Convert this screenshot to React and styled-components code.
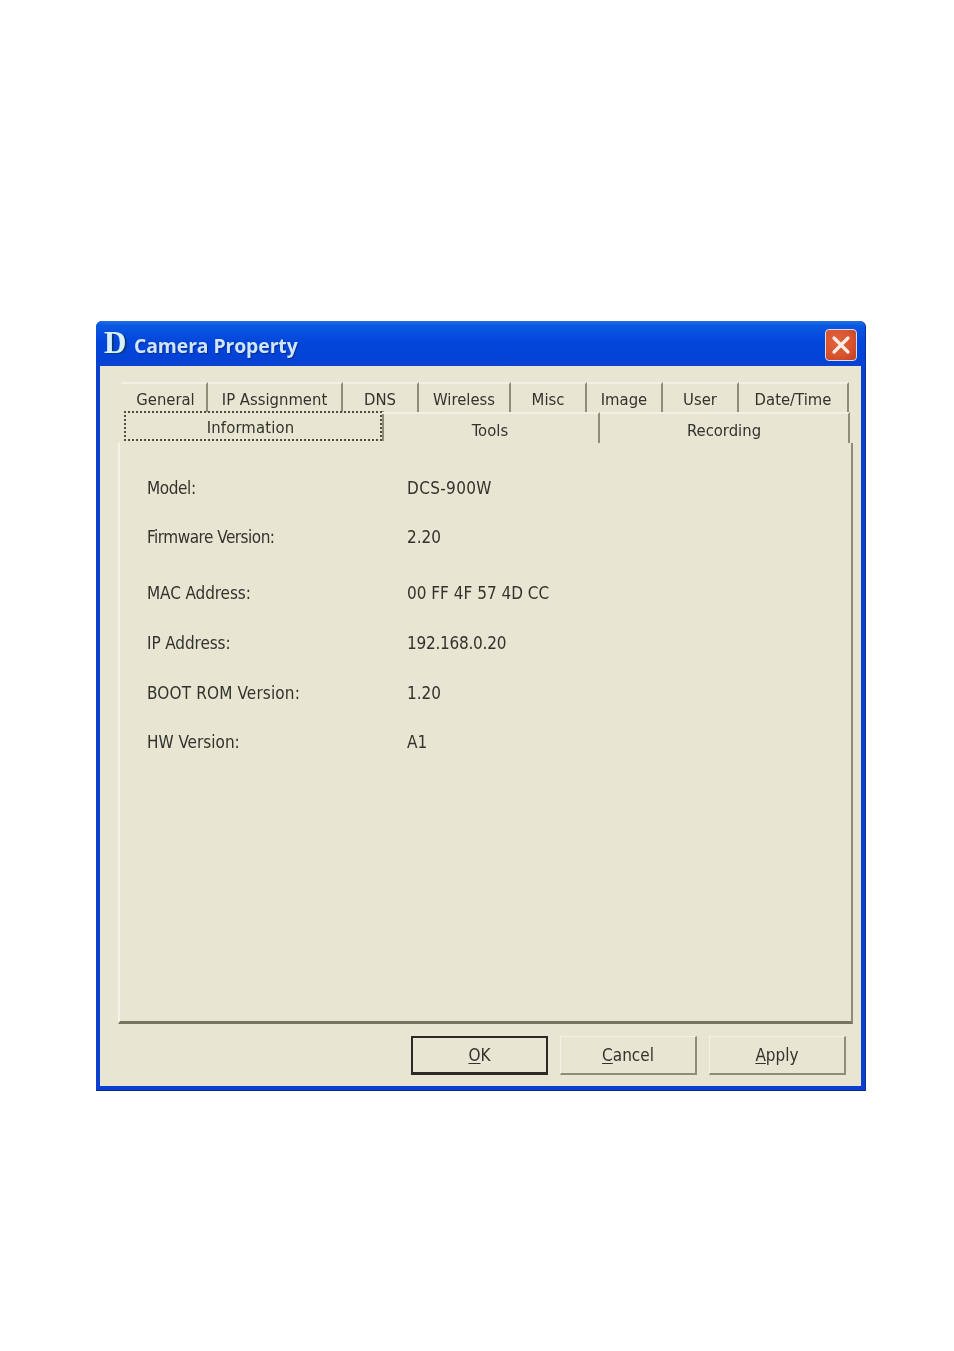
import React from 'react';
import styled, { createGlobalStyle } from 'styled-components';

const Global = createGlobalStyle`
  html, body { margin: 0; padding: 0; background: #fff; }
  body { width: 954px; height: 1351px; overflow: hidden; font-family: "DejaVu Sans Condensed", "DejaVu Sans", sans-serif; }
`;
const Page = styled.div`
  padding: 321px 0 0 96px;
`;
const Window = styled.div`
  width: 770px;
  height: 770px;
  box-sizing: border-box;
  display: flex;
  flex-direction: column;
  background: #0a3fcf;
  border-radius: 6px 6px 0 0;
  padding: 0 4px 4px 4px;
  border-right: 1px solid #0a2f9c;
  border-bottom: 1px solid #0a2a90;
  filter: blur(0.5px);
`;
const TitleBar = styled.div`
  height: 45px;
  flex: none;
  margin: 0 -4px;
  padding: 0 8px 0 8px;
  display: flex;
  align-items: center;
  border-radius: 6px 6px 0 0;
  background: linear-gradient(180deg, #1f6fe8 0%, #0a58e0 10%, #0346dc 45%, #0342d6 80%, #0a44d0 100%);
`;
const Logo = styled.span`
  font: bold 31px/1 "Liberation Serif", serif;
  color: #d8f0f8;
  text-shadow: 2px 1px 0 #0b3a7a;
  width: 26px;
  margin-right: 4px;
  margin-top: -3px;
`;
const Title = styled.span`
  font: bold 19.4px/1 "Open Sans", sans-serif;
  letter-spacing: -0.1px;
  color: #cfe6fa;
  text-shadow: 1px 1px 1px #0a2c90;
  flex: 1;
  margin-top: 5px;
`;
const CloseBtn = styled.div`
  width: 32px;
  height: 32px;
  box-sizing: border-box;
  margin-top: 3px;
  border: 1px solid #d8dcef;
  border-radius: 4px;
  background: radial-gradient(circle at 40% 40%, #e2643f 0%, #d9532e 55%, #bd3f22 100%);
  display: flex;
  align-items: center;
  justify-content: center;
  svg { display: block; }
`;
const Client = styled.div`
  flex: 1;
  display: flex;
  flex-direction: column;
  background: #e8e5d2;
  padding: 16px 14px 0 18px;
`;
const TabRow = styled.div`
  display: flex;
  height: ${p => p.$h}px;
  flex: none;
  padding-left: ${p => p.$pad}px;
`;
const Tab = styled.div`
  width: ${p => p.$w}px;
  flex: none;
  box-sizing: border-box;
  display: flex;
  align-items: center;
  justify-content: center;
  padding-top: ${p => p.$top}px;
  padding-left: ${p => p.$left || 0}px;
  border-top: 2px solid #f2f0e4;
  border-right: 2px solid #8f8c78;
  font-size: 16.5px;
  color: #33332e;
`;
const ActiveTab = styled.div`
  width: 258px;
  height: 30px;
  flex: none;
  box-sizing: border-box;
  margin-top: -1px;
  margin-left: 1px;
  display: flex;
  align-items: center;
  justify-content: center;
  padding: 2px 5px 0 0;
  border: 2px dotted #4d4d45;
  font-size: 16.5px;
  letter-spacing: 0.15px;
  color: #33332e;
  box-shadow: 2px 0 0 #8f8c78;
`;
const Panel = styled.div`
  height: 581px;
  flex: none;
  box-sizing: border-box;
  margin-right: -6px;
  border-left: 2px solid #f5f3e6;
  border-right: 2px solid #8f8c78;
  border-bottom: 3px solid #77745f;
  padding: 33px 0 0 27px;
  display: flex;
  flex-direction: column;
`;
const Row = styled.div`
  display: flex;
  height: 24px;
  align-items: center;
  margin-bottom: ${p => p.$gap}px;
  font-size: 17px;
  color: #33332e;
`;
const Label = styled.span`
  width: 260px;
  flex: none;
  letter-spacing: ${p => p.$track}px;
`;
const Value = styled.span`
  letter-spacing: ${p => p.$track}px;
`;
const Footer = styled.div`
  display: flex;
  justify-content: flex-end;
  gap: 12px;
  padding: 12px 1px 0 0;
`;
const Button = styled.div`
  width: 137px;
  height: 39px;
  box-sizing: border-box;
  display: flex;
  align-items: center;
  justify-content: center;
  font-size: 17px;
  color: #33332e;
  border: ${p => (p.$def ? '2px solid #2a2a26' : '1px solid #f4f2e6')};
  border-right: ${p => (p.$def ? '2px solid #2a2a26' : '2px solid #8f8c78')};
  border-bottom: ${p => (p.$def ? '3px solid #2a2a26' : '2px solid #8f8c78')};
  u { text-underline-offset: 2px; }
`;

const rows = [
  ['Model:', -0.4, 'DCS-900W', 0.35, 25],
  ['Firmware Version:', -0.5, '2.20', 0, 32],
  ['MAC Address:', -0.1, '00 FF 4F 57 4D CC', 0, 26],
  ['IP Address:', -0.1, '192.168.0.20', -0.25, 26],
  ['BOOT ROM Version:', 0.15, '1.20', 0, 25],
  ['HW Version:', 0, 'A1', 0, 0],
];
const topTabs = [
  ['General', 87, 4], ['IP Assignment', 135, 0], ['DNS', 76, 0], ['Wireless', 92, 0],
  ['Misc', 76, 0], ['Image', 76, 0], ['User', 76, 0], ['Date/Time', 110, 0],
];

export default function App() {
  return (
    <Page>
      <Global />
      <Window>
        <TitleBar>
          <Logo>D</Logo>
          <Title>Camera Property</Title>
          <CloseBtn>
            <svg width="24" height="24" viewBox="0 0 24 24">
              <path d="M5 5 L19 19 M19 5 L5 19" stroke="#fbeee6" strokeWidth="3.2" strokeLinecap="round" />
            </svg>
          </CloseBtn>
        </TitleBar>
        <Client>
          <TabRow $h={30} $pad={3}>
            {topTabs.map(([t, w, l]) => <Tab key={t} $w={w} $top={3} $left={l}>{t}</Tab>)}
          </TabRow>
          <TabRow $h={31} $pad={5}>
            <ActiveTab>Information</ActiveTab>
            <Tab $w={218} $top={4}>Tools</Tab>
            <Tab $w={250} $top={4}>Recording</Tab>
          </TabRow>
          <Panel>
            {rows.map(([a, ta, b, tb, g]) => (
              <Row key={a} $gap={g}><Label $track={ta}>{a}</Label><Value $track={tb}>{b}</Value></Row>
            ))}
          </Panel>
          <Footer>
            <Button $def><span><u>O</u>K</span></Button>
            <Button><span><u>C</u>ancel</span></Button>
            <Button><span><u>A</u>pply</span></Button>
          </Footer>
        </Client>
      </Window>
    </Page>
  );
}
